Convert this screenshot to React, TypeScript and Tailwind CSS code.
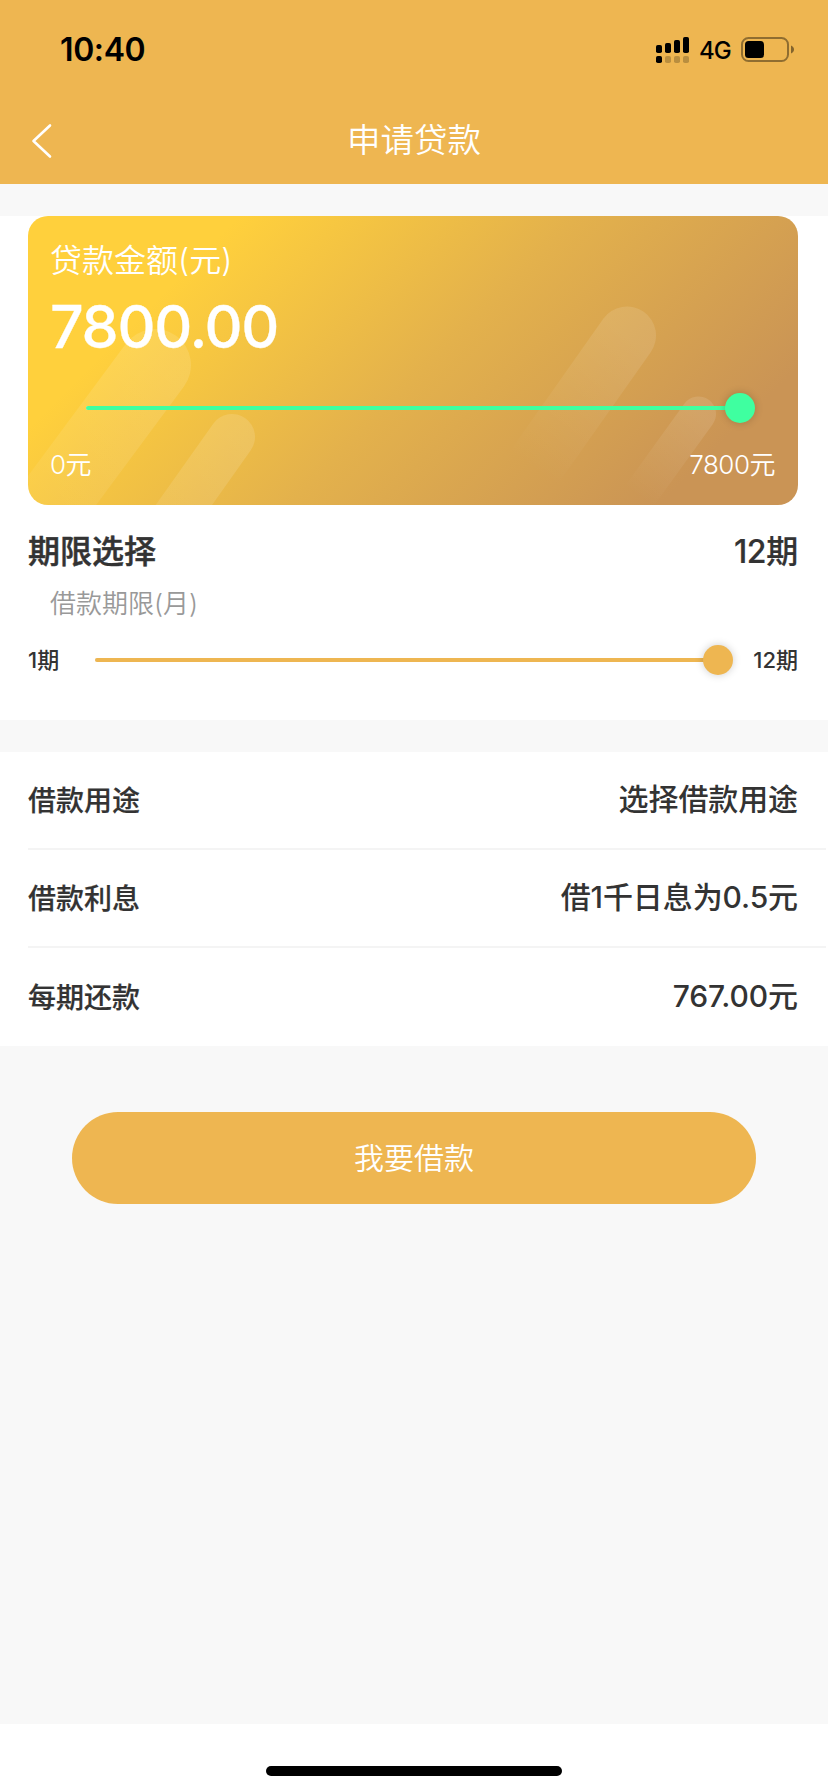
import React from 'react';
import { clsx } from 'clsx';

interface SliderProps {
  percent: number;
  barClass: string;
  className?: string;
}

const Slider: React.FC<SliderProps> = ({ percent, barClass, className }) => {
  return (
    <div className={clsx('relative h-[30px] flex items-center', className)}>
      <div className="w-full h-1 rounded-sm bg-gray-200">
        <div className={clsx('h-1 rounded-sm', barClass)} style={{ width: `${percent}%` }} />
      </div>
      <div
        className={clsx('absolute top-0 size-[30px] -ml-[15px] rounded-full shadow-[0_0_8px_rgba(0,0,0,0.2)]', barClass)}
        style={{ left: `${percent}%` }}
      />
    </div>
  );
};

const signalBars = [
  { x: 0, y: 8, on: true },
  { x: 9, y: 6, on: false },
  { x: 18, y: 3, on: false },
  { x: 27, y: 0, on: false }
];

const StatusBar: React.FC = () => {
  return (
    <div className="h-24 pl-[60px] pr-[34px] pt-[30px] flex items-start justify-between text-black">
      <span className="text-[32px] leading-10 font-semibold tracking-[-0.4px]">10:40</span>
      <div className="h-10 flex items-center">
        <svg width="33" height="26" viewBox="0 0 33 26" className="mr-[10px]">
          {signalBars.map((bar) => (
            <g key={bar.x}>
              <rect x={bar.x} y={bar.y} width="6" height={16 - bar.y} rx="1.8" />
              <rect x={bar.x} y="19" width="6" height="7" rx="1.8" opacity={bar.on ? 1 : 0.22} />
            </g>
          ))}
        </svg>
        <span className="pt-px text-2xl leading-10 font-medium tracking-[-0.8px]">4G</span>
        <svg width="53" height="26" viewBox="0 0 53 26" className="ml-[10px]">
          <rect x="1" y="1" width="46" height="23" rx="6.5" fill="none" stroke="#000" strokeWidth="2" opacity="0.4" />
          <rect x="4" y="4" width="19" height="17" rx="3.5" />
          <path d="M50 8.5c2 .8 3 2.300 3 4s-1 3.200-3 4z" opacity="0.45" />
        </svg>
      </div>
    </div>
  );
};

const NavBar: React.FC = () => {
  return (
    <div className="relative h-[88px] flex items-center justify-center">
      <svg
        width="22"
        height="36"
        viewBox="0 0 22 36"
        className="absolute left-[31px] top-[27px]"
        fill="none"
        stroke="#fff"
        strokeWidth="2.600"
        strokeLinecap="round"
        strokeLinejoin="round"
      >
        <path d="M19 2.500L2.500 18L19 33.500" />
      </svg>
      <h1 className="text-[33.500px] leading-[48px] font-[350] text-white">申请贷款</h1>
    </div>
  );
};

// slanted light streaks behind the amount
const CardStreaks: React.FC = () => {
  return (
    <svg className="absolute inset-0" width="770" height="289" viewBox="0 0 770 289" fill="none" strokeLinecap="round">
      <defs>
        <linearGradient id="s1" gradientUnits="userSpaceOnUse" x1="127" y1="149" x2="10" y2="305">
          <stop offset="0" stopColor="#fff" stopOpacity="0.12" />
          <stop offset="1" stopColor="#fff" stopOpacity="0.05" />
        </linearGradient>
        <linearGradient id="s2" gradientUnits="userSpaceOnUse" x1="204" y1="221" x2="140" y2="310">
          <stop offset="0" stopColor="#fff" stopOpacity="0.13" />
          <stop offset="1" stopColor="#fff" stopOpacity="0.09" />
        </linearGradient>
        <linearGradient id="s3" gradientUnits="userSpaceOnUse" x1="599" y1="119" x2="504" y2="254">
          <stop offset="0" stopColor="#fff" stopOpacity="0.11" />
          <stop offset="1" stopColor="#fff" stopOpacity="0" />
        </linearGradient>
        <linearGradient id="s4" gradientUnits="userSpaceOnUse" x1="670" y1="198" x2="610" y2="281">
          <stop offset="0" stopColor="#fff" stopOpacity="0.11" />
          <stop offset="1" stopColor="#fff" stopOpacity="0" />
        </linearGradient>
      </defs>
      <path d="M127 149L-50 388" stroke="url(#s1)" strokeWidth="72" />
      <path d="M204 221L90 382" stroke="url(#s2)" strokeWidth="46" />
      <path d="M599 119.500L500 260" stroke="url(#s3)" strokeWidth="58" />
      <path d="M670.500 198L607 286" stroke="url(#s4)" strokeWidth="35" />
    </svg>
  );
};

const AmountCard: React.FC = () => {
  return (
    <div className="relative ml-7 w-[770px] h-[289px] rounded-[20px] overflow-hidden bg-[linear-gradient(135deg,#ffd03c_20%,#e3b14c_52%,#ca9455_87%)] text-white">
      <CardStreaks />
      <div className="relative h-full pl-[22px] pr-[23px] pt-[25px] flex flex-col">
        <p className="h-10 text-[32px] leading-10 font-[350]">贷款金额(元)</p>
        <p className="mt-[13px] h-[66px] text-[59px] leading-[66px] font-medium tracking-[-1.300px] [-webkit-text-stroke:0.3px]">7800.00</p>
        <Slider percent={100} barClass="bg-[#3fffa0]" className="mt-[33px] ml-[36px] w-[654px]" />
        <div className="mt-[26px] flex justify-between text-[26px] leading-8 font-[350] tracking-[-0.5px]">
          <span>0元</span>
          <span>7800元</span>
        </div>
      </div>
    </div>
  );
};

const TermSection: React.FC = () => {
  return (
    <div className="pl-7 pr-[30px] pt-[27px] h-[215px] text-[#333]">
      <div className="flex justify-between text-[32px] leading-10 font-medium">
        <span className="[-webkit-text-stroke:0.5px]">期限选择</span>
        <span className="tracking-[-0.3px] [-webkit-text-stroke:0.2px]">12期</span>
      </div>
      <p className="mt-4 pl-[22px] text-[26px] leading-8 font-[350] text-[#999]">借款期限(月)</p>
      <div className="mt-[25px] h-[30px] flex items-center justify-between text-[22px] leading-[30px] font-medium">
        <span>1期</span>
        <Slider percent={100} barClass="bg-[#eeb651]" className="ml-auto mr-[35px] w-[623px]" />
        <span>12期</span>
      </div>
    </div>
  );
};

const rows = [
  { label: '借款用途', value: '选择借款用途' },
  { label: '借款利息', value: '借1千日息为0.5元' },
  { label: '每期还款', value: '767.00元' }
];

export default function App() {
  return (
    <div
      lang="zh-CN"
      className="w-[828px] h-[1792px] flex flex-col overflow-hidden bg-[#f8f8f8] font-['Inter','Noto_Sans_CJK_SC',sans-serif]"
    >
      <header className="bg-[#eeb651]">
        <StatusBar />
        <NavBar />
      </header>

      <section className="mt-8 bg-white">
        <AmountCard />
        <TermSection />
      </section>

      <section className="mt-8 pl-7 pr-[2px] bg-white text-[#333] font-medium">
        {rows.map((row, i) => (
          <div
            key={row.label}
            className={clsx('h-[98px] pr-7 flex items-center justify-between', i < rows.length - 1 && 'border-b-2 border-[#f4f4f4]')}
          >
            <span className="pt-0.5 text-[28px] leading-10 [-webkit-text-stroke:0.2px]">{row.label}</span>
            <span className="pb-0.5 text-[30px] leading-10 tracking-[-0.1px]">{row.value}</span>
          </div>
        ))}
      </section>

      <button className="mt-[66px] mx-[72px] h-[92px] shrink-0 rounded-full bg-[#eeb651] text-[30px] font-[350] text-white">
        我要借款
      </button>

      <footer className="mt-auto h-[68px] pt-[42px] bg-white">
        <div className="mx-auto w-[296px] h-[10px] rounded-full bg-black" />
      </footer>
    </div>
  );
}
